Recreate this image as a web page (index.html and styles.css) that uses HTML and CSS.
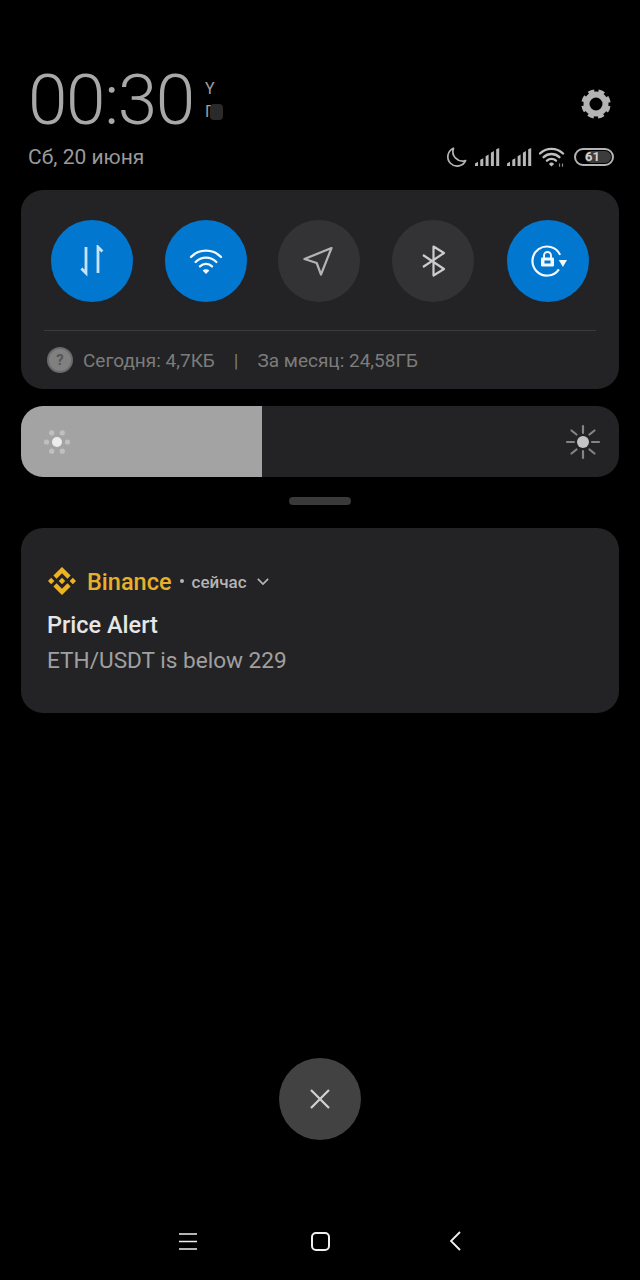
FILE: index.html
```html
<!DOCTYPE html>
<html lang="ru">
<head>
  <meta charset="UTF-8" />
  <meta name="viewport" content="width=device-width, initial-scale=1.0" />
  <title>Notification shade</title>
  <link rel="stylesheet" href="styles.css">
</head>
<body>
  <header class="top">
    <div class="clock-row">
      <div class="clock">00:30</div>
      <div class="clock-marks">
        <span>Y</span>
        <span class="smudged">Г<i class="smudge"></i></span>
      </div>
      <svg class="gear" viewBox="0 0 32 32" width="32" height="32">
        <circle cx="16" cy="16" r="9.5" fill="none" stroke="#b4b4b4" stroke-width="6"/>
        <circle cx="16" cy="16" r="13" fill="none" stroke="#b4b4b4" stroke-width="3.4" stroke-dasharray="6 4.21" stroke-dashoffset="-2.1"/>
      </svg>
    </div>
    <div class="status-row">
      <div class="date">Сб, 20 июня</div>
      <div class="status-icons">
        <svg viewBox="0 0 24 24" width="24" height="24"><path d="M9.5 3.2A9.3 9.3 0 1 0 21.6 15.6 9.6 9.6 0 0 1 9.5 3.2z" fill="none" stroke="#b4b4b4" stroke-width="1.7" stroke-linejoin="round"/></svg>
        <svg class="bars" viewBox="0 0 25 18" width="25" height="18"><path d="M0 18v-2.6l3-1.6V18zM5.3 18v-6.2l3-1.6V18zM10.6 18V8.3l3-1.7V18zM15.9 18V4.8l3-1.7V18zM21.2 18V1.3l3-1.3V18z" fill="#b8b8b8"/></svg>
        <svg class="bars" viewBox="0 0 25 18" width="25" height="18"><path d="M0 18v-2.6l3-1.6V18zM5.3 18v-6.2l3-1.6V18zM10.6 18V8.3l3-1.7V18zM15.9 18V4.8l3-1.7V18zM21.2 18V1.3l3-1.3V18z" fill="#b8b8b8"/></svg>
        <svg class="status-wifi" viewBox="0 0 26 20" width="26" height="20">
          <g fill="none" stroke="#c0c0c0" stroke-width="2.4" stroke-linecap="round">
            <path d="M1 6.5a16.6 16.6 0 0 1 23 0"/>
            <path d="M4.6 10.2a11.5 11.5 0 0 1 15.8 0"/>
            <path d="M8 13.6a6.6 6.6 0 0 1 9 0"/>
          </g>
          <path d="M12.5 19.5l-2.6-2.6a3.6 3.6 0 0 1 5.2 0z" fill="#c0c0c0"/>
          <path d="M20.5 19.8v-3.4M23.5 19.8v-3.4" stroke="#8a8a8a" stroke-width="1.2"/>
        </svg>
        <div class="battery"><span class="battery-fill"></span><span class="battery-num">61</span></div>
      </div>
    </div>
  </header>

  <section class="panel toggles">
    <div class="toggle-row">
      <div class="toggle on">
        <svg viewBox="0 0 32 32" width="32" height="32" fill="none" stroke="#c6e2f7" stroke-width="2.8">
          <path d="M10 2v26l-4.6-4.6"/><path d="M22 28V2l4.4 4.4"/>
        </svg>
      </div>
      <div class="toggle on">
        <svg viewBox="0 0 34 28" width="34" height="28" fill="none" stroke="#f2f8fd" stroke-width="2.3" stroke-linecap="round">
          <path d="M2 10a21 21 0 0 1 30 0"/><path d="M6.6 15a14.5 14.5 0 0 1 20.8 0"/><path d="M11 19.4a8.4 8.4 0 0 1 12 0"/>
          <path d="M17 27l-3.4-3.4a4.8 4.8 0 0 1 6.8 0z" fill="#f2f8fd" stroke="none"/>
        </svg>
      </div>
      <div class="toggle off">
        <svg viewBox="0 0 32 32" width="32" height="32" fill="none" stroke="#b4b4b4" stroke-width="2.2" stroke-linejoin="round">
          <path d="M28.5 3L1.5 14l12.2 4L18 29.5z"/>
        </svg>
      </div>
      <div class="toggle off">
        <svg viewBox="0 0 32 32" width="32" height="32" fill="none" stroke="#cccccc" stroke-width="2.2" stroke-linejoin="round">
          <path d="M6 10l21 14-10.5 6.5V1.5L27 8 6 22"/>
        </svg>
      </div>
      <div class="toggle on">
        <svg viewBox="-1 0 38 36" width="38" height="36" fill="none" stroke="#f2f8fd" stroke-width="2.2">
          <path d="M30.1 11.9A14.5 14.5 0 1 0 28.9 26.3"/>
          <rect x="11" y="14.5" width="13" height="9" rx="1.2" fill="#f2f8fd" stroke="none"/>
          <rect x="14.5" y="17.5" width="6" height="3" fill="#0277cf" stroke="none"/>
          <path d="M14 15v-2.5a3.500 3.500 0 0 1 7 0V15" stroke-width="1.9"/>
          <path d="M28.8 17h8.2l-4.100 7z" fill="#f2f8fd" stroke="none"/>
        </svg>
      </div>
    </div>
    <div class="usage">
      <span class="usage-help">?</span>
      <span>Сегодня: 4,7КБ</span>
      <span class="usage-sep">|</span>
      <span>За месяц: 24,58ГБ</span>
    </div>
  </section>

  <section class="brightness">
    <div class="brightness-fill">
      <svg viewBox="0 0 32 32" width="32" height="32">
        <circle cx="16" cy="16" r="5" fill="#ececec"/>
        <g fill="#c0c0c0">
          <circle cx="5.5" cy="16" r="2.6"/><circle cx="26.5" cy="16" r="2.6"/>
          <circle cx="10.7" cy="6.8" r="2.6"/><circle cx="21.3" cy="6.8" r="2.6"/>
          <circle cx="10.7" cy="25.2" r="2.6"/><circle cx="21.3" cy="25.2" r="2.6"/>
        </g>
      </svg>
    </div>
    <svg class="sun" viewBox="0 0 36 36" width="36" height="36">
      <circle cx="18" cy="18" r="6" fill="#c4c4c4"/>
      <path d="M18 2v7M18 27v7M2 18h7M27 18h7M6.5 6.5l5 4M29.5 6.5l-5 4M6.5 29.5l5-4M29.5 29.5l-5-4" stroke="#848484" stroke-width="2.2" stroke-linecap="round"/>
    </svg>
  </section>

  <div class="handle"></div>

  <section class="panel notification">
    <div class="notif-head">
      <svg class="logo" viewBox="0 0 126.6 126.6" width="28" height="28" fill="#eeb322">
        <path d="M38.7 53.2L63.3 28.6l24.6 24.6 14.3-14.3L63.3 0 24.4 38.9z"/>
        <path d="M0 63.3L14.3 49l14.3 14.3-14.3 14.3z"/>
        <path d="M38.7 73.4L63.3 98l24.6-24.6 14.3 14.3-38.9 38.9-38.9-38.9z"/>
        <path d="M98 63.3L112.3 49l14.3 14.3-14.3 14.3z"/>
        <path d="M77.8 63.3L63.3 48.8 48.8 63.3l14.5 14.5z"/>
      </svg>
      <span class="app-name">Binance</span>
      <span class="dot"></span>
      <span class="when">сейчас</span>
      <svg class="chevron" viewBox="0 0 14 8" width="12" height="7" fill="none" stroke="#b4b4b4" stroke-width="2"><path d="M1 1l6 6 6-6"/></svg>
    </div>
    <div class="notif-title">Price Alert</div>
    <div class="notif-body">ETH/USDT is below 229</div>
  </section>

  <div class="spacer"></div>

  <div class="close">
    <svg viewBox="0 0 20 20" width="20" height="20" stroke="#d2d2d2" stroke-width="2.2"><path d="M1 1l18 18M19 1L1 19"/></svg>
  </div>

  <nav class="nav">
    <svg viewBox="0 0 18 17" width="18" height="17" stroke="#f0f0f0" stroke-width="1.7"><path d="M0 1h18M0 8.5h18M0 16h18"/></svg>
    <svg viewBox="0 0 19 19" width="19" height="19" fill="none" stroke="#f0f0f0" stroke-width="2"><rect x="1" y="1" width="17" height="17" rx="4"/></svg>
    <svg class="nav-back" viewBox="0 0 12 20" width="12" height="20" fill="none" stroke="#f0f0f0" stroke-width="1.8"><path d="M11 1L2 10l9 9"/></svg>
  </nav>
</body>
</html>
```

FILE: styles.css
```css
* {
  box-sizing: border-box;
}
html, body {
  margin: 0;
  background: #000;
}
body {
  width: 640px;
  height: 1280px;
  display: flex;
  flex-direction: column;
  font-family: Roboto, "Noto Sans", sans-serif;
  overflow: hidden;
}
svg {
  display: block;
  flex: none;
}

.top {
  padding: 65px 0 0 28px;
  height: 190px;
}
.clock-row {
  display: flex;
  align-items: center;
  height: 70px;
  padding-right: 28px;
}
.clock {
  font-size: 71px;
  font-weight: 300;
  line-height: 70px;
  letter-spacing: -1.3px;
  color: #a8a8a8;
}
.clock-marks {
  display: flex;
  flex-direction: column;
  margin-left: 11px;
  font-size: 16px;
  line-height: 23px;
  color: #a0a0a0;
}
.smudged {
  position: relative;
}
.smudge {
  position: absolute;
  left: 5px;
  top: 4px;
  width: 13px;
  height: 16px;
  border-radius: 4px;
  background: #2a2a2a;
}
.gear {
  align-self: flex-start;
  margin: 23px 0 0 auto;
}
.status-row {
  display: flex;
  align-items: center;
  justify-content: space-between;
  height: 30px;
  margin-top: 7px;
  padding-right: 26px;
}
.date {
  font-size: 21px;
  color: #9a9a9a;
}
.status-icons {
  display: flex;
  align-items: center;
  gap: 7px;
}
.battery {
  position: relative;
  width: 40px;
  height: 18px;
  margin-left: 2px;
  border: 2px solid #b4b4b4;
  border-radius: 9px;
  padding: 1px;
}
.battery-fill {
  display: block;
  width: 76%;
  height: 100%;
  margin-left: auto;
  border-radius: 6px;
  background: #3c3c3c;
}
.battery-num {
  position: absolute;
  left: 0;
  right: 3px;
  top: -1px;
  text-align: center;
  font-size: 13px;
  line-height: 16px;
  font-weight: 700;
  color: #d0d0d0;
}

.panel {
  margin: 0 21px;
  background: #232325;
  border-radius: 22px;
}
.toggles {
  height: 199px;
  padding: 30px 23px 0;
}
.toggle-row {
  display: flex;
  justify-content: space-between;
  padding: 0 7px 28px;
  border-bottom: 1px solid #3a3a3c;
}
.toggle {
  width: 82px;
  height: 82px;
  border-radius: 50%;
  background: #333335;
  display: flex;
  align-items: center;
  justify-content: center;
}
.toggle.on {
  background: #0277cf;
}
.toggle.off {
  margin: 0 1px 0 -1px;
}
.usage {
  display: flex;
  align-items: center;
  height: 58px;
  padding-left: 3px;
  font-size: 19px;
  color: #7c7c7c;
}
.usage-help {
  width: 26px;
  height: 26px;
  margin-right: 10px;
  border-radius: 50%;
  border: 2px solid #6a6a6a;
  background: #808080;
  color: #555;
  font-size: 15px;
  font-weight: 700;
  line-height: 22px;
  text-align: center;
}
.usage-sep {
  margin: 0 19px;
}

.brightness {
  display: flex;
  align-items: center;
  justify-content: space-between;
  height: 71px;
  margin: 17px 21px 0;
  padding-right: 18px;
  background: #232325;
  border-radius: 22px;
  overflow: hidden;
}
.brightness-fill {
  display: flex;
  align-items: center;
  width: 241px;
  height: 100%;
  padding-left: 20px;
  background: #a3a3a3;
}

.handle {
  width: 62px;
  height: 8px;
  margin: 20px auto 23px;
  border-radius: 4px;
  background: #3a3a3a;
}

.notification {
  height: 185px;
  padding: 39px 26px 0;
}
.notif-head {
  display: flex;
  align-items: center;
  height: 28px;
}
.logo {
  margin-left: 1px;
}
.app-name {
  margin: 2px 0 0 11px;
  font-size: 23.5px;
  font-weight: 500;
  color: #e8b02a;
}
.dot {
  width: 4px;
  height: 4px;
  margin: 0 8px;
  border-radius: 50%;
  background: #b4b4b4;
}
.when {
  margin-top: 2px;
  font-size: 17px;
  font-weight: 500;
  color: #b4b4b4;
}
.chevron {
  margin-left: 10px;
}
.notif-title {
  margin-top: 12px;
  font-size: 23.5px;
  line-height: 36px;
  font-weight: 500;
  color: #e6e6e6;
}
.notif-body {
  font-size: 22.6px;
  line-height: 36px;
  color: #a0a0a0;
}

.spacer {
  flex: 1;
}
.close {
  width: 82px;
  height: 82px;
  margin: 0 auto;
  border-radius: 50%;
  background: #424242;
  display: flex;
  align-items: center;
  justify-content: center;
}
.nav {
  display: flex;
  align-items: center;
  justify-content: center;
  gap: 114px;
  height: 40px;
  margin: 81px 0 19px;
}
.nav-back {
  margin-left: 5px;
}
```
